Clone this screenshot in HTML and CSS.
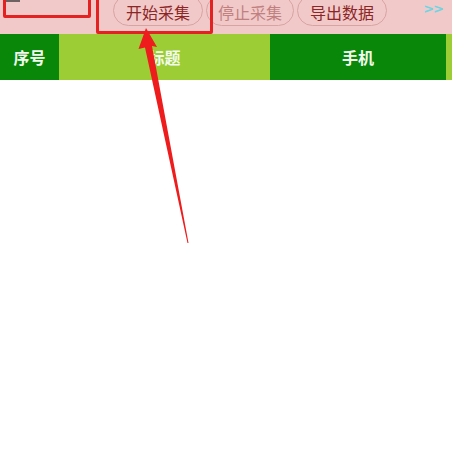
FILE: index.html
```html
<!DOCTYPE html>
<html>
<head>
<meta charset="utf-8">
<link rel="stylesheet" href="styles.css">
</head>
<body>
<div class="page">
  <div class="toolbar">
    <div class="left-slot"><span class="checkbox"></span></div>
    <div class="btns">
      <span class="pill">开始采集</span>
      <span class="pill disabled">停止采集</span>
      <span class="pill">导出数据</span>
    </div>
    <span class="more">&gt;&gt;</span>
  </div>
  <div class="thead">
    <div class="th dark c1">序号</div>
    <div class="th light c2">标题</div>
    <div class="th dark c3">手机</div>
    <div class="th light c4"></div>
  </div>
  <div class="mark mark1"></div>
  <div class="mark mark2"></div>
  <svg class="arrow" width="452" height="452" viewBox="0 0 452 452">
    <polygon points="146,28 157,47 152,46 188.5,243 187.5,243 145,47.5 138.5,49" fill="#ee1c1c"/>
  </svg>
</div>
</body>
</html>
```
FILE: styles.css
```css
html, body {
  margin: 0;
  padding: 0;
  background: #ffffff;
}
.page {
  position: relative;
  width: 452px;
  height: 452px;
  overflow: hidden;
  font-family: "Noto Sans CJK SC", "Noto Sans", sans-serif;
}
.toolbar {
  height: 34px;
  background: #f1c9c9;
  display: flex;
  align-items: flex-start;
  overflow: hidden;
}
.left-slot {
  width: 113px;
  flex: none;
  position: relative;
}
.checkbox {
  display: block;
  margin-left: 5px;
  margin-top: -12px;
  width: 15px;
  height: 14px;
  border: 2px solid #6e6262;
  border-top: none;
  box-sizing: border-box;
}
.btns {
  display: flex;
  gap: 3px;
  margin-top: -5px;
}
.pill {
  width: 90px;
  height: 31px;
  box-sizing: border-box;
  border: 1px solid #d9a3a3;
  border-radius: 16px;
  display: flex;
  align-items: center;
  justify-content: center;
  padding-top: 2px;
  font-size: 16px;
  color: #8c2626;
}
.pill.disabled {
  color: #c08080;
  width: 88px;
}
.more {
  margin-left: auto;
  margin-right: 9px;
  margin-top: 1px;
  font-size: 13px;
  font-weight: bold;
  letter-spacing: -1px;
  color: #6ad6e4;
  font-family: "DejaVu Sans", sans-serif;
}
.thead {
  display: flex;
  height: 46px;
}
.th {
  display: flex;
  align-items: center;
  justify-content: center;
  font-size: 16px;
  font-weight: bold;
  color: #f2fbee;
}
.dark { background: #098709; }
.light { background: #9ccd34; }
.c1 { width: 59px; }
.c2 { width: 211px; }
.c3 { width: 176px; }
.c4 { flex: 1; }
.mark {
  position: absolute;
  border: 3px solid #e42222;
  border-radius: 2px;
  box-sizing: border-box;
}
.mark1 {
  left: 3px;
  top: -20px;
  width: 88px;
  height: 38px;
}
.mark2 {
  left: 96px;
  top: -20px;
  width: 117px;
  height: 54px;
}
.arrow {
  position: absolute;
  left: 0;
  top: 0;
}
```
